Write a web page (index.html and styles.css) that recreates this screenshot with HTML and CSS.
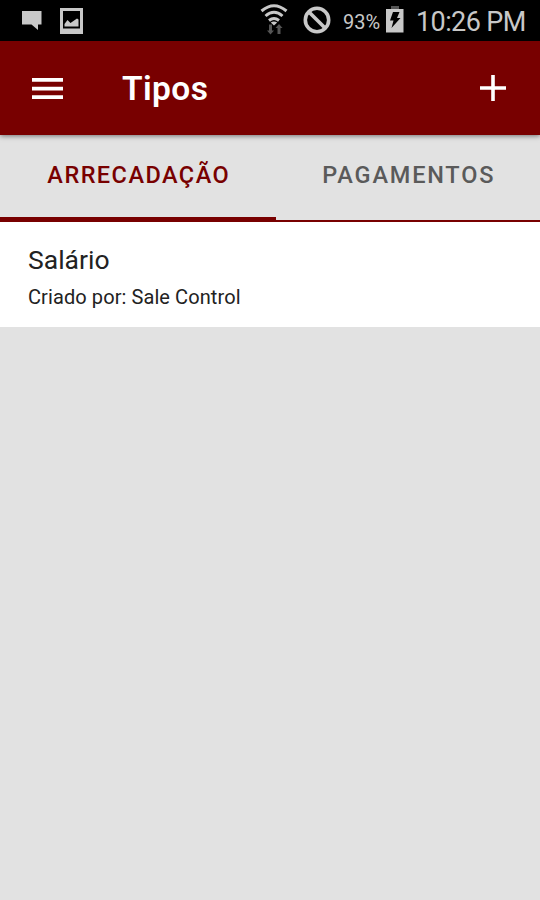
FILE: index.html
```
<!DOCTYPE html>
<html lang="pt-BR">
<head>
<meta charset="utf-8">
<title>Tipos</title>
<link rel="stylesheet" href="styles.css">
</head>
<body>
<div class="status">
  <svg class="chat" width="20" height="20" viewBox="0 0 20 20"><path fill="#c8c8c8" d="M0 0h19.5v13.500H16v5.500l-6.500-5.500H0z"/></svg>
  <svg class="picture" width="24" height="27" viewBox="0 0 24 27"><path fill="#c8c8c8" fill-rule="evenodd" d="M0 0h23v26H0zM3 3v17.500h17V3z"/><path fill="#c8c8c8" d="M4.500 18.500v-2.500l3-4 3 3 6.500-4.500 1.500 1v7z"/></svg>
  <svg class="wifi" width="28" height="31" viewBox="0 0 28 31"><g fill="none" stroke="#c8c8c8" stroke-width="3"><path d="M1.500 7Q14-3.500 26.500 7"/><path d="M5.500 12Q14 4.500 22.500 12"/><path d="M9 16.500Q14 12.500 19 16.500"/></g><path fill="#c8c8c8" d="M10.800 18.500q3.200-2 6.400 0L14 21.500z"/><path fill="#555" d="M9 20.500h3v6h2L10.500 30.500 7 26.500h2zM17.500 30v-6h-2L19 20l3.500 4h-2v6z"/></svg>
  <svg class="blocked" width="28" height="28" viewBox="0 0 28 28"><g fill="none" stroke="#c8c8c8" stroke-width="3.600"><circle cx="14" cy="14" r="11.700"/><path d="M5.700 5.700l16.600 16.600"/></g></svg>
  <span class="percent">93%</span>
  <svg class="battery" width="18" height="27" viewBox="0 0 18 27"><path fill="#555" d="M5 0h8v3H5z"/><path fill="#c8c8c8" d="M0 3h17.500v23.500H0z"/><path fill="#000" d="M7 6h6.500l-2.500 6h3.500L5.500 22l2-7.500H4z"/></svg>
  <span class="clock">10:26 PM</span>
</div>
<header class="bar">
  <svg class="menu" width="31" height="22" viewBox="0 0 31 22"><path fill="#fff" d="M0 0h31v3.700H0zM0 8.800h31v3.700H0zM0 17.300h31V21H0z"/></svg>
  <h1>Tipos</h1>
  <svg class="plus" width="26" height="26" viewBox="0 0 26 26"><path fill="#fff" d="M11.200 0h3.600v11.200H26v3.600H14.800V26h-3.600V14.800H0v-3.600h11.200z"/></svg>
</header>
<nav class="tabs">
  <div class="tab active"><span>ARRECADAÇÃO</span></div>
  <div class="tab"><span>PAGAMENTOS</span></div>
</nav>
<main>
  <article class="item">
    <h2>Salário</h2>
    <p>Criado por: Sale Control</p>
  </article>
</main>
</body>
</html>
```
FILE: styles.css
```
* { box-sizing: border-box; }
body { margin: 0; height: 900px; overflow: hidden; background: #e2e2e2; font-family: Roboto, sans-serif; }
svg { display: block; flex: none; }
h1, h2, p { margin: 0; font-weight: 400; white-space: nowrap; }
.status { display: flex; align-items: flex-start; height: 41px; background: #000; color: #c8c8c8; white-space: nowrap; }
.chat { margin: 11px 0 0 21.500px; }
.picture { margin: 8px 0 0 18.500px; }
.wifi { margin: 4px 0 0 176px; }
.blocked { margin: 6px 0 0 15px; }
.percent { width: 54px; padding-left: 12px; margin-top: 10px; font-size: 20px; line-height: 24px; }
.battery { margin: 6px 0 0 1px; }
.clock { margin: 6px 0 0 12px; font-size: 27px; line-height: 32px; letter-spacing: -.6px; }
.bar { display: flex; align-items: center; height: 94px; padding: 0 34px 0 32px; background: #780000; color: #fff; box-shadow: 0 1px 5px rgba(0, 0, 0, .5); position: relative; }
.menu { margin-top: 1px; }
.bar h1 { flex: 1; margin: 1px 0 0 59px; font-size: 33.500px; line-height: 40px; font-weight: 600; letter-spacing: .4px; }
.tabs { display: grid; grid-template-columns: 275.500px 264.500px; height: 87px; color: #5a5a5a; font-size: 23.500px; font-weight: 500; line-height: 30px; letter-spacing: 1.800px; text-align: center; }
.tab { padding: 25px 0 0 2px; border-bottom: 2px solid #780000; }
.tab.active { color: #780000; border-bottom-width: 5px; letter-spacing: 1.450px; }
.item { height: 105px; padding: 22px 28px 0; background: #fff; color: #222; }
.item h2 { font-size: 26.500px; line-height: 32px; }
.item p { margin-top: 9px; font-size: 20px; line-height: 24px; letter-spacing: .09px; }
```
